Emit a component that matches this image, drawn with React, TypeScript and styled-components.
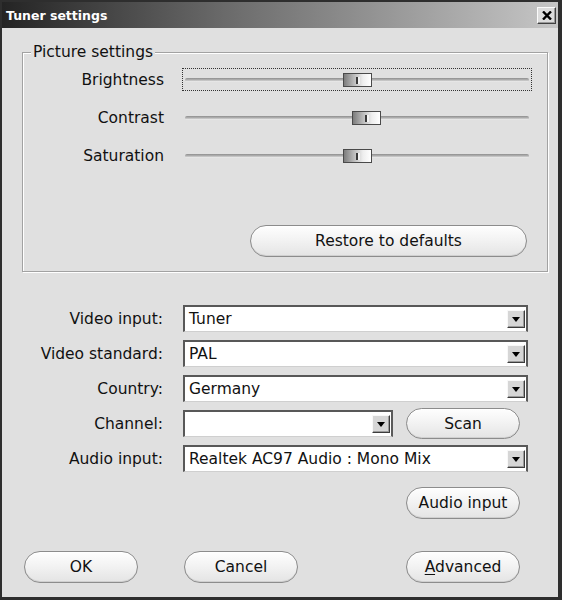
import styled, { createGlobalStyle } from 'styled-components'

const GlobalStyle = createGlobalStyle`
  html, body {
    margin: 0;
    padding: 0;
    background: #e0e0e0;
  }
  * {
    box-sizing: border-box;
  }
`

const Window = styled.div`
  width: 562px;
  height: 600px;
  display: flex;
  flex-direction: column;
  border-style: solid;
  border-color: #2e2e2e;
  border-width: 2px 4px 3px 2px;
  background: #e0e0e0;
  font-family: 'DejaVu Sans', Verdana, sans-serif;
  font-size: 15.5px;
  color: #111;
`

const TitleBar = styled.div`
  height: 26px;
  flex: none;
  display: flex;
  align-items: center;
  padding: 0 2px 0 4px;
  background: linear-gradient(to right, #242424, #6a6a6a 40%, #c6c6c6);
`

const TitleText = styled.span`
  font-weight: bold;
  font-size: 12.5px;
  color: #fff;
`

const CloseButton = styled.button`
  margin-left: auto;
  width: 19px;
  height: 17px;
  padding: 0;
  display: flex;
  align-items: center;
  justify-content: center;
  background: #dcdcdc;
  border: 1px solid;
  border-color: #fafafa #404040 #404040 #fafafa;
  box-shadow: inset -1px -1px 0 #9a9a9a;
`

const Body = styled.div`
  flex: 1;
  display: flex;
  flex-direction: column;
  padding-top: 24px;
`

const GroupBox = styled.div`
  width: 526px;
  margin-left: 20px;
  border: 1px solid #a2a2a2;
  box-shadow: inset 1px 1px 0 #fff, 1px 1px 0 #fff;
  display: flex;
  flex-direction: column;
`

const Legend = styled.span`
  align-self: flex-start;
  margin: -10px 0 0 8px;
  padding: 0 2px;
  line-height: 18px;
  background: #e0e0e0;
`

const SliderGrid = styled.div`
  margin-top: 7px;
  display: grid;
  grid-template-columns: 141px 350px;
  column-gap: 18px;
  row-gap: 15px;
  grid-auto-rows: 23px;
  align-items: center;
`

const Label = styled.span`
  text-align: right;
  white-space: nowrap;
`

const SliderBox = styled.div<{ $focused?: boolean }>`
  position: relative;
  height: 23px;
  border: 1px dotted ${(p) => (p.$focused ? '#333' : 'transparent')};
  display: flex;
  align-items: center;
  padding: 0 2px 0 2px;
`

const Track = styled.div`
  position: relative;
  flex: 1;
  height: 4px;
  border-radius: 2px;
  background: linear-gradient(#8e8e8e, #b4b4b4 50%, #f6f6f6);
`

const Thumb = styled.div`
  position: absolute;
  top: -5px;
  width: 29px;
  height: 14px;
  border: 1px solid #4a4a4a;
  background: linear-gradient(to right, #7c7c7c, #b8b8b8 35%, #eeeeee 70%, #fff);

  &::after {
    content: '';
    position: absolute;
    left: 12px;
    top: 3px;
    width: 2px;
    height: 7px;
    background: #3a3a3a;
    box-shadow: 2px 0 0 #f4f4f4;
  }
`

const RestoreRow = styled.div`
  display: flex;
  justify-content: flex-end;
  padding: 0 20px 14px 0;
  margin-top: 58px;
`

const Pill = styled.button<{ $width: number }>`
  width: ${(p) => p.$width}px;
  height: 32px;
  flex: none;
  border-radius: 16px;
  border: 1px solid #8c8c8c;
  background: linear-gradient(#fefefe, #f3f3f3 45%, #e4e4e4);
  box-shadow: inset 0 1px 0 #fff, inset 0 -1px 0 #d0d0d0;
  font-family: inherit;
  font-size: 15.5px;
  color: #111;
  padding: 0;

  u {
    text-decoration: underline;
    text-underline-offset: 2px;
  }
`

const Form = styled.div`
  margin-top: 33px;
  display: grid;
  grid-template-columns: 161px 345px;
  column-gap: 20px;
  row-gap: 8px;
  grid-auto-rows: 27px;
  align-items: center;
`

const ChannelRow = styled.div`
  display: flex;
  align-items: center;
  gap: 13px;
`

const Combo = styled.div<{ $width?: number }>`
  width: ${(p) => (p.$width ? `${p.$width}px` : '100%')};
  height: 27px;
  display: flex;
  align-items: center;
  background: #fff;
  border-style: solid;
  border-width: 2px 2px 1px 2px;
  border-color: #585858 #5a5a5a #cfcfcf #585858;
`

const ComboText = styled.span`
  flex: 1;
  padding-left: 4px;
  white-space: nowrap;
  overflow: hidden;
`

const DropButton = styled.span`
  width: 18px;
  height: 18px;
  margin-right: 1px;
  display: flex;
  align-items: center;
  justify-content: center;
  background: #d6d6d6;
  border: 1px solid;
  border-color: #f8f8f8 #3c3c3c #3c3c3c #f8f8f8;
  box-shadow: inset -1px -1px 0 #9a9a9a;

  &::after {
    content: '';
    border-left: 4px solid transparent;
    border-right: 4px solid transparent;
    border-top: 5px solid #000;
    margin-top: 1px;
  }
`

const ScanButton = styled(Pill)`
  margin: -2px 0;
  height: 31px;
`

const AudioRow = styled.div`
  display: flex;
  justify-content: flex-end;
  padding-right: 38px;
  margin-top: 15px;
`

const ButtonRow = styled.div`
  display: flex;
  align-items: center;
  gap: 46px;
  padding: 0 38px 0 22px;
  margin-top: 32px;
`

const Spacer = styled.div`
  flex: 1;
`

function Slider({ value, focused }: { value: number; focused?: boolean }) {
  return (
    <SliderBox $focused={focused}>
      <Track>
        <Thumb style={{ left: `${(value / 100) * 316}px` }} />
      </Track>
    </SliderBox>
  )
}

function ComboBox({ text, width }: { text: string; width?: number }) {
  return (
    <Combo $width={width}>
      <ComboText>{text}</ComboText>
      <DropButton />
    </Combo>
  )
}

export default function App() {
  return (
    <>
      <GlobalStyle />
      <Window>
        <TitleBar>
          <TitleText>Tuner settings</TitleText>
          <CloseButton aria-label="Close">
            <svg width="10" height="9" viewBox="0 0 10 9">
              <path d="M1 0.5 L9 8.5 M9 0.5 L1 8.5" stroke="#000" strokeWidth="2.4" />
            </svg>
          </CloseButton>
        </TitleBar>

        <Body>
          <GroupBox>
            <Legend>Picture settings</Legend>
            <SliderGrid>
              <Label>Brightness</Label>
              <Slider value={50} focused />
              <Label>Contrast</Label>
              <Slider value={53} />
              <Label>Saturation</Label>
              <Slider value={50} />
            </SliderGrid>
            <RestoreRow>
              <Pill $width={277}>Restore to defaults</Pill>
            </RestoreRow>
          </GroupBox>

          <Form>
            <Label>Video input:</Label>
            <ComboBox text="Tuner" />
            <Label>Video standard:</Label>
            <ComboBox text="PAL" />
            <Label>Country:</Label>
            <ComboBox text="Germany" />
            <Label>Channel:</Label>
            <ChannelRow>
              <ComboBox text="" width={210} />
              <ScanButton $width={114}>Scan</ScanButton>
            </ChannelRow>
            <Label>Audio input:</Label>
            <ComboBox text="Realtek AC97 Audio : Mono Mix" />
          </Form>

          <AudioRow>
            <Pill $width={114}>Audio input</Pill>
          </AudioRow>

          <ButtonRow>
            <Pill $width={114}>OK</Pill>
            <Pill $width={114}>Cancel</Pill>
            <Spacer />
            <Pill $width={114}>
              <u>A</u>dvanced
            </Pill>
          </ButtonRow>
        </Body>
      </Window>
    </>
  )
}
